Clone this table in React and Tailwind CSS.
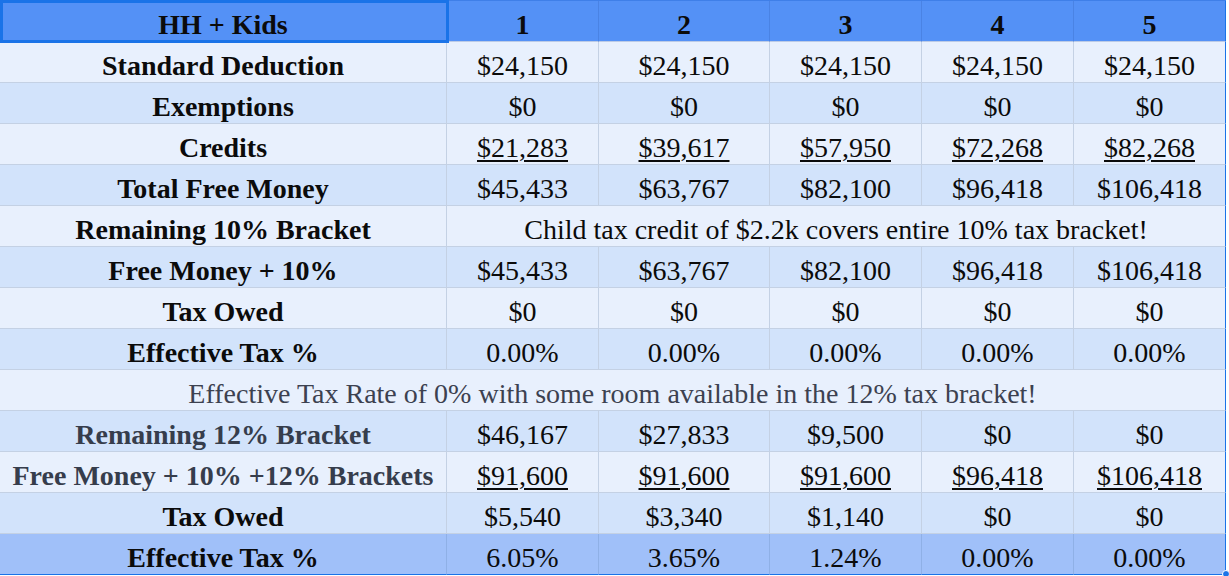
const rows = [
  { label: "Standard Deduction", values: ["$24,150", "$24,150", "$24,150", "$24,150", "$24,150"], tone: "light" },
  { label: "Exemptions", values: ["$0", "$0", "$0", "$0", "$0"], tone: "dark" },
  { label: "Credits", values: ["$21,283", "$39,617", "$57,950", "$72,268", "$82,268"], tone: "light", underline: true },
  { label: "Total Free Money", values: ["$45,433", "$63,767", "$82,100", "$96,418", "$106,418"], tone: "dark" },
  { label: "Remaining 10% Bracket", span: "Child tax credit of $2.2k covers entire 10% tax bracket!", tone: "light" },
  { label: "Free Money + 10%", values: ["$45,433", "$63,767", "$82,100", "$96,418", "$106,418"], tone: "dark" },
  { label: "Tax Owed", values: ["$0", "$0", "$0", "$0", "$0"], tone: "light" },
  { label: "Effective Tax %", values: ["0.00%", "0.00%", "0.00%", "0.00%", "0.00%"], tone: "dark" },
  { note: "Effective Tax Rate of 0% with some room available in the 12% tax bracket!", tone: "light" },
  { label: "Remaining 12% Bracket", values: ["$46,167", "$27,833", "$9,500", "$0", "$0"], tone: "dark", muted: true },
  { label: "Free Money + 10% +12% Brackets", values: ["$91,600", "$91,600", "$91,600", "$96,418", "$106,418"], tone: "light", muted: true, underline: true },
  { label: "Tax Owed", values: ["$5,540", "$3,340", "$1,140", "$0", "$0"], tone: "dark" },
  { label: "Effective Tax %", values: ["6.05%", "3.65%", "1.24%", "0.00%", "0.00%"], tone: "foot" },
];

const cols = "grid grid-cols-[447px_152px_171px_152px_152px_152px]";

const toneBg = {
  light: "bg-[#e8f0fd]",
  dark: "bg-[#d2e3fb]",
  foot: "bg-[#a0c0f9]",
};

const Cell = ({ children, className = "" }) => (
  <div className={`flex items-center justify-center pt-[8px] border-r border-b whitespace-nowrap ${className}`}>
    {children}
  </div>
);

export default function App() {
  return (
    <div
      className="w-[1229px] h-[576px] bg-white text-[28px] leading-none text-[#0b0b0b] overflow-hidden"
      style={{ fontFamily: '"Liberation Serif", "Times New Roman", serif' }}
    >
      <div className="relative w-[1226px]">
        {/* header */}
        <div className={`${cols} h-[42px] bg-[#5491f6] font-bold border-t border-[#3f7fe8]`}>
          <Cell className="border-[#4a83e4]">HH + Kids</Cell>
          {[1, 2, 3, 4, 5].map((n) => (
            <Cell key={n} className={n === 5 ? "border-r-[#1a73e8] border-b-[#bccbe6]" : "border-[#4a83e4] border-b-[#bccbe6]"}>
              {n}
            </Cell>
          ))}
        </div>
        <div className="absolute left-0 top-0 w-[449px] h-[43px] border-[3px] border-[#1a73e8] pointer-events-none" />

        {rows.map((r, i) => {
          const last = r.tone === "foot";
          const line = last ? "border-[#8fb0e6] border-b-[#1a73e8]" : "border-[#c4d1e4]";
          const edge = "border-r-[#1a73e8]";
          return (
            <div key={i} className={`${cols} h-[41px] ${toneBg[r.tone]}`}>
              {r.note ? (
                <Cell className={`col-span-6 text-[#3c4150] ${line} ${edge}`}>{r.note}</Cell>
              ) : (
                <>
                  <Cell className={`font-bold ${r.muted ? "text-[#363d4c]" : ""} ${line}`}>{r.label}</Cell>
                  {r.span ? (
                    <Cell className={`col-span-5 ${line} ${edge}`}>{r.span}</Cell>
                  ) : (
                    r.values.map((v, j) => (
                      <Cell key={j} className={`${line} ${j === 4 ? edge : ""}`}>
                        <span className={r.underline ? "underline decoration-[1.5px] underline-offset-[3px]" : ""}>{v}</span>
                      </Cell>
                    ))
                  )}
                </>
              )}
            </div>
          );
        })}
        <div className="absolute right-[-4px] bottom-[-3px] w-[8px] h-[8px] rounded-full bg-[#1a73e8] border border-white" />
      </div>
    </div>
  );
}
